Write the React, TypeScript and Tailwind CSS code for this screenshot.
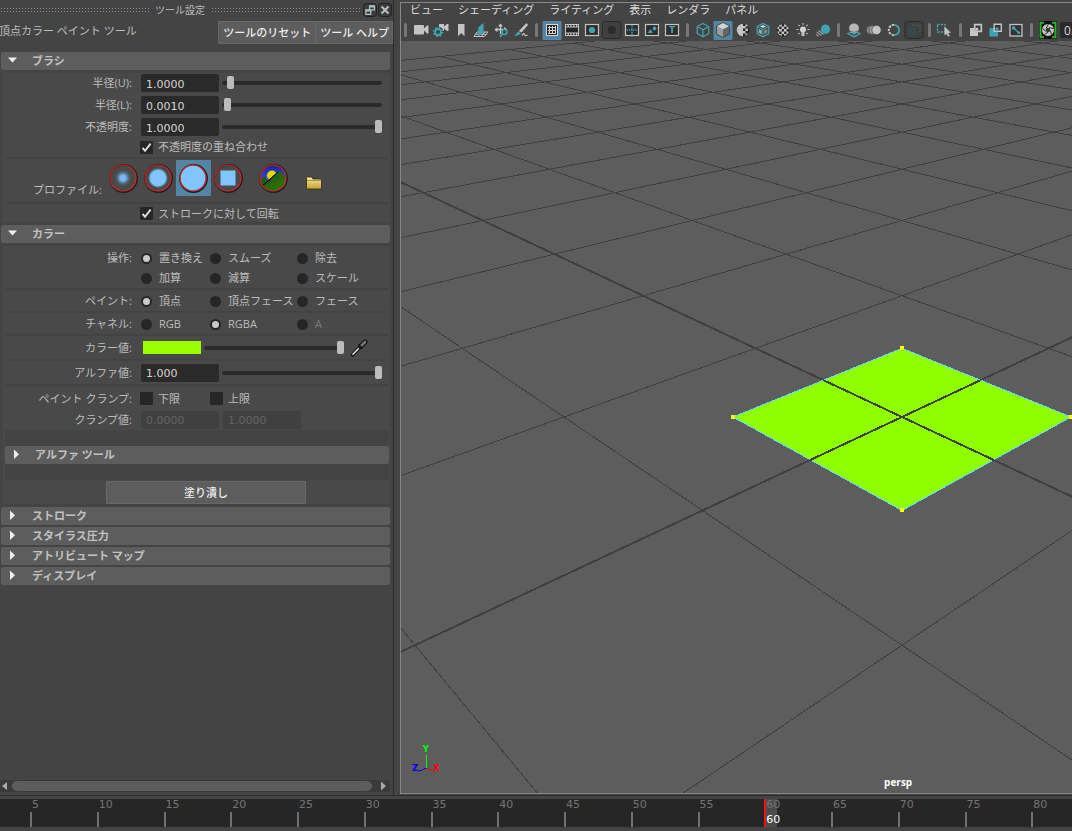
import React from "react";

const LIGHT = "#c4c4c4";
const TEAL = "#3fa3b3";
const DARK = "#262626";

/* ---------- small form pieces ---------- */

function Row({ label, htmlFor, className = "", children }: { label?: string; htmlFor?: string; className?: string; children: React.ReactNode }) {
  const text = "w-[129px] shrink-0 whitespace-nowrap text-right";
  return (
    <div className={`flex items-center gap-[9px] ${className}`}>
      {htmlFor ? (
        <label htmlFor={htmlFor} className={text}>{label}</label>
      ) : (
        <span className={text}>{label}</span>
      )}
      {children}
    </div>
  );
}

function NumberBox({ id, value, disabled, label }: { id: string; value: string; disabled?: boolean; label?: string }) {
  return (
    <input
      id={id}
      type="text"
      aria-label={label}
      defaultValue={value}
      disabled={disabled}
      className="h-[18px] w-[78px] shrink-0 rounded-xs bg-[#2a2a2a] px-[5px] pt-[2px] font-['DejaVu_Sans',sans-serif] text-[11px] text-[#d6d6d6] outline-none disabled:bg-[#404040] disabled:text-[#656565]"
    />
  );
}

function Slider({ label, value }: { label: string; value: number }) {
  return (
    <input
      type="range"
      aria-label={label}
      defaultValue={value}
      min={0}
      max={100}
      className="h-[13px] min-w-0 flex-1 appearance-none bg-transparent [&::-webkit-slider-runnable-track]:h-[4px] [&::-webkit-slider-runnable-track]:rounded-full [&::-webkit-slider-runnable-track]:bg-[#2a2a2a] [&::-webkit-slider-thumb]:-mt-[5px] [&::-webkit-slider-thumb]:h-[13px] [&::-webkit-slider-thumb]:w-[7px] [&::-webkit-slider-thumb]:appearance-none [&::-webkit-slider-thumb]:rounded-xs [&::-webkit-slider-thumb]:bg-[#bcbcbc]"
    />
  );
}

function Check({ label, checked }: { label: string; checked?: boolean }) {
  return (
    <label className="-ml-px flex items-center gap-[5px] whitespace-nowrap">
      <span className="grid">
        <input type="checkbox" defaultChecked={checked} className="peer col-start-1 row-start-1 size-[13px] appearance-none rounded-[1px] bg-[#262626]" />
        <svg viewBox="0 0 13 13" className="pointer-events-none invisible col-start-1 row-start-1 size-[13px] peer-checked:visible">
          <path d="M2.6 6.8 5 9.8 10.6 2.6" fill="none" stroke="#e2e2e2" strokeWidth="1.9" />
        </svg>
      </span>
      {label}
    </label>
  );
}

function Radio({ name, label, checked, disabled }: { name: string; label: string; checked?: boolean; disabled?: boolean }) {
  return (
    <label className={`flex items-center gap-[7px] whitespace-nowrap ${disabled ? "text-[#7b7b7b]" : ""}`}>
      <input
        type="radio"
        name={name}
        defaultChecked={checked}
        disabled={disabled}
        className="size-[11px] shrink-0 appearance-none rounded-full border-2 border-[#262626] bg-[#262626] checked:bg-[#cacaca]"
      />
      {label}
    </label>
  );
}

function RadioRow({ label, name, options, className = "" }: { label?: string; name: string; className?: string; options: { label: string; checked?: boolean; disabled?: boolean }[] }) {
  return (
    <Row label={label} className={className}>
      <div role="radiogroup" aria-label={label ?? name} className="grid flex-1 grid-cols-[69px_87px_1fr]">
        {options.map((o) => (
          <Radio key={o.label} name={name} {...o} />
        ))}
      </div>
    </Row>
  );
}

function SectionHeader({ title, open, nested }: { title: string; open?: boolean; nested?: boolean }) {
  return (
    <button
      type="button"
      aria-expanded={!!open}
      className="flex h-[18px] w-full shrink-0 items-center gap-[12px] rounded-xs bg-[#5d5d5d] pl-[5px] text-left font-bold text-[#c2c2c2]"
    >
      <svg viewBox="0 0 14 14" className={nested ? "-mr-px size-[14px]" : "size-[14px]"} fill="#eee">
        {open ? <path d="M2 3.500H11L6.500 8.500Z" /> : <path d="M4 1.500V11L9 6.200Z" />}
      </svg>
      {title}
    </button>
  );
}

const Divider = () => <div className="mx-[2px] h-[2px] shrink-0 bg-[#434343]" />;

/* ---------- brush profile pictures ---------- */

function Ring({ children }: { children: React.ReactNode }) {
  return (
    <svg viewBox="0 0 30 30" className="size-[30px]">
      <defs>
        <radialGradient id="soft"><stop offset="0" stopColor="#7cc2ff" /><stop offset=".35" stopColor="#70b2ec" /><stop offset="1" stopColor="#494949" stopOpacity="0" /></radialGradient>
        <radialGradient id="mid"><stop offset=".75" stopColor="#80c5ff" /><stop offset="1" stopColor="#80c5ff" stopOpacity="0" /></radialGradient>
        <linearGradient id="sky" x1="0" y1="0" x2="0" y2="1"><stop offset="0" stopColor="#141c8c" /><stop offset=".5" stopColor="#3848d0" /></linearGradient>
        <linearGradient id="hill" x1="0" y1="0" x2="1" y2="1"><stop offset="0" stopColor="#1c4b08" /><stop offset="1" stopColor="#348010" /></linearGradient>
        <clipPath id="disc"><circle cx="15" cy="15" r="12.800" /></clipPath>
      </defs>
      <circle cx="15.500" cy="15.500" r="13.600" fill="none" stroke="#1e1e1e" strokeWidth="1.600" />
      {children}
      <circle cx="15" cy="15" r="13" fill="none" stroke="#d42525" strokeWidth="1.200" />
    </svg>
  );
}

function Profile({ label, active, children }: { label: string; active?: boolean; children: React.ReactNode }) {
  return (
    <button type="button" aria-label={label} aria-pressed={!!active} className={`flex h-[36px] w-[35px] items-center justify-start rounded-[1px] pl-[2px] ${active ? "bg-[#5385a6]" : ""}`}>
      <Ring>{children}</Ring>
    </button>
  );
}

/* ---------- toolbar icons, each on a 20 x 20 board ---------- */

const frame = <rect x="3.500" y="4.500" width="13" height="11" fill="#2d2d2d" stroke={LIGHT} strokeWidth="1.200" />;
const balls = (
  <g fill={LIGHT}>
    {[[7, 4], [12, 4], [4.5, 6.5], [9.500, 6.500], [14.500, 6.500], [7, 9], [12, 9], [4.500, 11.500], [9.500, 11.500], [14.500, 11.500], [7, 14], [12, 14]].map(([x, y]) => (
      <rect key={`${x}-${y}`} x={x - 1} y={y} width="2.700" height="2.600" />
    ))}
  </g>
);

const icons: Record<string, React.ReactNode> = {
  camera: <path d="M3 6q0-1 1-1h8q1 0 1 1v2.500l3-3h1.500v8H16l-3-3V13.500q0 1-1 1H4q-1 0-1-1Z" fill={LIGHT} />,
  cameraSettings: (
    <>
      <path d="M8 4h5v2.500l3-2.500h1.500v7H16l-3-2.500V11H8Z" fill={LIGHT} />
      <circle cx="7" cy="12" r="5.500" fill="#444" />
      <circle cx="7" cy="12" r="3" fill="none" stroke={TEAL} strokeWidth="1.800" />
      <circle cx="7" cy="12" r="4.600" fill="none" stroke={TEAL} strokeWidth="1.300" strokeDasharray="1.800 1.812" />
    </>
  ),
  bookmark: <path d="M7 4h6.500v12.200L10.200 13 7 16.200Z" fill={LIGHT} />,
  imagePlane: (
    <>
      <path d="M6 12 3 16.500h10.500L17 12ZM4.500 14.300h11M7 16.500l3-4.500M10.500 16.500l3-4.500" fill="none" stroke={LIGHT} />
      <path d="M7.200 7.500 12.500 3v9.500l-5.300 4Z" fill={TEAL} />
    </>
  ),
  panZoom: (
    <>
      <path d="M9.500 4v10M4 9.500h10" stroke={LIGHT} strokeWidth="1.300" />
      <path d="M7 6.500 9.500 3.500 12 6.500ZM6.500 7.200 3.500 9.700l3 2.500ZM13 7l3.500 2.500L13 12Z" fill={LIGHT} />
      <circle cx="13.500" cy="12" r="2.500" fill="#444" stroke={TEAL} strokeWidth="1.500" />
      <path d="M11.500 14 9 16.800" stroke={TEAL} strokeWidth="1.800" />
    </>
  ),
  grease: (
    <>
      <path d="M15.500 3 17 5 10.500 12.500 7.800 11Z" fill={LIGHT} />
      <path d="M7 11.500 9.800 13.200Q7.500 16.500 3 15.600 5 14.500 7 11.500Z" fill={TEAL} />
      <path d="M11 15.500q1.500-3 2.500-1t3 .5" fill="none" stroke={LIGHT} strokeWidth="1.300" />
    </>
  ),
  grid: (
    <g shapeRendering="crispEdges">
      <rect x="4" y="4" width="12" height="12" fill={DARK} />
      <path d="M4.500 4.500h11v11h-11ZM7.500 6v8M10.500 6v8M13.500 6v8M6 7.500h8M6 10.500h8M6 13.500h8" fill="none" stroke="#d4d4d4" />
    </g>
  ),
  film: (
    <>
      <rect x="3" y="4" width="14" height="12" fill={LIGHT} />
      <path d="M4 5.800h12M4 14.200h12" stroke={DARK} strokeWidth="1.600" strokeDasharray="1.600 1.200" />
      <rect x="4" y="7.500" width="12" height="5" fill={DARK} />
    </>
  ),
  resolution: <>{frame}<circle cx="10" cy="10" r="3.100" fill={TEAL} /></>,
  gateMask: (
    <>
      <rect x=".5" y="1.500" width="18.500" height="17" rx="2.500" fill="#3f3f3f" stroke="#2a2a2a" />
      <circle cx="9.700" cy="10" r="4" fill="#2b2b2b" />
    </>
  ),
  fieldChart: <>{frame}<path d="M10 5.500v9.500M4.500 10h11" stroke={TEAL} strokeWidth="1.500" strokeDasharray="1.300 .9" /></>,
  safeAction: <>{frame}<path d="M5.500 13 8.500 9 11 13Z" fill={TEAL} /><circle cx="12.500" cy="8.500" r="1.900" fill={TEAL} /></>,
  safeTitle: <>{frame}<text x="10" y="13.200" textAnchor="middle" fill={TEAL} fontFamily="DejaVu Sans" fontWeight="700" fontSize="9">T</text></>,
  wireCube: <path d="M10 3.500 15.800 6.500v7L10 16.700 4.200 13.500v-7ZM4.200 6.500 10 9.700l5.800-3.200M10 9.700v7" fill="none" stroke={TEAL} strokeWidth="1.200" />,
  shadedCube: (
    <>
      <path d="M10 2.500 16.500 6 10 9.500 3.500 6Z" fill="#d2d2d2" />
      <path d="M3.500 6 10 9.500V17.500L3.500 14Z" fill="#9c9c9c" />
      <path d="M16.500 6 10 9.500V17.500L16.500 14Z" fill="#666" />
      <path d="M10 2.500 16.500 6v8L10 17.500 3.500 14V6Z" fill="none" stroke="#393939" strokeWidth=".8" />
    </>
  ),
  halfChecker: (
    <>
      <circle cx="10" cy="10" r="6.300" fill={DARK} />
      <path d="M10 3.700a6.300 6.300 0 0 0 0 12.600Z" fill={LIGHT} />
      <path d="M10 6h2.500v2.500H10ZM12.500 8.500H15V11h-2.500ZM10 11h2.500v2.500H10ZM12.500 4l2 1v1.500h-2ZM12.500 13.500h2.500L12.500 16Z" fill={LIGHT} />
    </>
  ),
  wireShaded: (
    <>
      <path d="M10 3.500 15.800 6.500v7L10 16.700 4.200 13.500v-7Z" fill="#3a3a3a" stroke={TEAL} strokeWidth="1.300" />
      <path d="M7 6.500 10 5l3 1.500L10 8.100Z" fill="#d4d4d4" />
      <path d="M5.600 8.800 8.900 10.600v4L5.600 12.800Z" fill="#a8a8a8" />
      <path d="M14.400 8.800 11.100 10.600v4l3.300-1.800Z" fill="#858585" />
      <path d="M4.200 6.500 10 9.700l5.800-3.200M10 9.700v7" fill="none" stroke={TEAL} strokeWidth="1.100" />
    </>
  ),
  checker: <><circle cx="10" cy="10" r="6.500" fill={DARK} /><g clipPath="url(#checkerClip)">{balls}</g></>,
  bulb: (
    <>
      <circle cx="10" cy="9.500" r="3" fill="#d2d2d2" />
      <path d="M8.500 11.500h3V16h-3Z" fill={LIGHT} />
      <path d="M10 3v2M3.500 9.500h2M14.500 9.500h2M5.300 4.800l1.400 1.400M14.700 4.800l-1.400 1.400M5.300 14.200l1.400-1.400M14.700 14.200l-1.400-1.400" stroke={LIGHT} strokeWidth="1.100" />
    </>
  ),
  shadows: (
    <>
      <path d="M3.500 12l5 3.500M5.500 10.500l5 4M3 14.500l3 1.800" stroke="#999" strokeWidth="1.200" />
      <circle cx="12.500" cy="9.300" r="4.700" fill={TEAL} />
    </>
  ),
  occlusion: (
    <>
      <path d="M4 13.500 10 11l6 2.500-6 3.500ZM7 12l6 4M13 12l-6 4" fill="none" stroke={TEAL} strokeWidth="1.300" />
      <circle cx="10" cy="8.300" r="4.900" fill="#b6b6b6" />
      <path d="M6 11q4 2.500 8 0" fill="none" stroke="#777" />
    </>
  ),
  motion: (
    <>
      <circle cx="7" cy="10" r="4.300" fill="#8a8a8a" />
      <circle cx="9.500" cy="10" r="4.500" fill="#a2a2a2" stroke="#444" strokeWidth=".8" />
      <circle cx="12.500" cy="10" r="4.700" fill={LIGHT} stroke="#444" strokeWidth=".8" />
    </>
  ),
  antialias: (
    <>
      <path d="M10 4.800a5.200 5.200 0 0 0 0 10.400" fill="none" stroke={LIGHT} strokeWidth="2" strokeDasharray="2.200 1.200" />
      <path d="M10 4.800a5.200 5.200 0 0 1 0 10.400" fill="none" stroke={TEAL} strokeWidth="1.800" />
    </>
  ),
  depth: (
    <>
      <rect x="1" y="1.500" width="18" height="17" rx="2.500" fill="#3f3f3f" stroke="#2a2a2a" />
      <rect x="4" y="8" width="8" height="8" fill="#34494e" />
      <path d="M8 5h8v7" fill="none" stroke="#4f4f4f" strokeWidth="2.500" strokeDasharray="1.500 1.300" />
    </>
  ),
  isolate: (
    <>
      <rect x="2.500" y="4.500" width="7.500" height="7.500" fill="none" stroke={TEAL} strokeWidth="1.400" strokeDasharray="2.200 1.200" />
      <path d="M9.500 6.500v9l2-1.800 1.600 3 1.600-.9-1.500-2.800 2.700-.3Z" fill={LIGHT} />
    </>
  ),
  xray: (
    <>
      <rect x="4" y="8" width="8" height="8" fill={LIGHT} />
      <path d="M8.700 4.700h6.600v6.600H8.700Z" fill="#3a3a3a" stroke={LIGHT} strokeWidth="1.700" />
      <rect x="9.500" y="7.800" width="2.800" height="2.800" fill={LIGHT} />
    </>
  ),
  xrayActive: (
    <>
      <rect x="3.500" y="8" width="8.500" height="8.500" fill={TEAL} />
      <path d="M8.200 4.200h7.100v7.100H8.200Z" fill="#333" stroke={LIGHT} strokeWidth="1.400" />
      <rect x="9.500" y="7.500" width="3" height="3" fill={TEAL} />
    </>
  ),
  xrayJoints: (
    <>
      <rect x="4" y="4.500" width="12" height="11.500" fill="#333" stroke={LIGHT} strokeWidth="1.300" />
      <path d="M7.500 8l5.500 5" stroke={TEAL} strokeWidth="1.500" />
      <path d="M6 6.500h3.200v3H6ZM11.500 11.500h2.500V14h-2.500Z" fill={TEAL} />
    </>
  ),
  exposure: (
    <>
      <path d="M1 1h18v18H1Z" fill="#111" />
      <path d="M6 2.800H2.500v14.500H6M14 2.800h3.500v14.500H14" fill="none" stroke="#24b424" strokeWidth="2" />
      <circle cx="10" cy="10" r="6" fill={LIGHT} />
      <circle cx="10" cy="10" r="2.200" fill="#333" />
      <path d="M8 8.500 10.500 4M11 7.700l5 .8M12.200 10.500l1.500 4.300M10 12.300 6.200 14.600M7.800 11.200 4.200 8.500" stroke="#333" strokeWidth="1" />
    </>
  ),
};

type Tool = [icon: string, label: string, active?: boolean];
const toolGroups: Tool[][] = [
  [["camera", "カメラの選択"], ["cameraSettings", "カメラ アトリビュート"], ["bookmark", "ブックマーク"], ["imagePlane", "イメージ プレーン"], ["panZoom", "2D パン/ズーム"], ["grease", "グリース ペンシル"]],
  [["grid", "グリッド", true], ["film", "フィルム ゲート"], ["resolution", "解像度ゲート"], ["gateMask", "ゲート マスク"], ["fieldChart", "フィールド チャート"], ["safeAction", "セーフ アクション"], ["safeTitle", "セーフ タイトル"]],
  [["wireCube", "ワイヤフレーム"], ["shadedCube", "スムーズ シェード", true], ["halfChecker", "既定のマテリアル"], ["wireShaded", "シェード上のワイヤ"], ["checker", "テクスチャ"], ["bulb", "ライト"], ["shadows", "シャドウ"]],
  [["occlusion", "アンビエント オクルージョン"], ["motion", "モーション ブラー"], ["antialias", "アンチエイリアス"], ["depth", "被写界深度"]],
  [["isolate", "選択項目の分離"]],
  [["xray", "X 線表示"], ["xrayActive", "アクティブ X 線"], ["xrayJoints", "ジョイント X 線"]],
];

function Separator() {
  return (
    <span className="flex w-[11px] shrink-0 justify-center">
      <span className="h-[14px] w-[3px] rounded-full bg-[#777]" />
    </span>
  );
}

function ToolButton({ tool: [icon, label, active] }: { tool: Tool }) {
  return (
    <button type="button" aria-label={label} aria-pressed={!!active} className="size-[20px] shrink-0">
      <svg viewBox="0 0 20 20" className="size-[20px]">
        {active && <rect x=".5" y="1" width="19" height="19" rx="1" fill="#5385a6" />}
        {icons[icon]}
      </svg>
    </button>
  );
}

/* ---------- 3D view ---------- */

const GRID = 12;
const DEPTH = 0.153;

/** Projects a point of the ground plane through the persp camera. */
function project(i: number, j: number): [number, number] {
  const w = 1 + DEPTH * (i + j);
  return [902 + (169 * (i - j)) / w, -100.6 + 517.6 / w];
}

/** Nearest value along a grid line that is still in front of the camera. */
const nearest = (fixed: number) => Math.max(-GRID, (0.15 - 1) / DEPTH - fixed);

const gridLines = Array.from({ length: 2 * GRID + 1 }, (_, n) => n - GRID).flatMap((n) =>
  nearest(n) >= GRID
    ? []
    : [
        { key: `i${n}`, axis: n === 0, from: project(n, nearest(n)), to: project(n, GRID) },
        { key: `j${n}`, axis: n === 0, from: project(nearest(n), n), to: project(GRID, n) },
      ],
);

function Line({ from, to, width, color }: { from: [number, number]; to: [number, number]; width: number; color: string }) {
  return <line x1={from[0]} y1={from[1]} x2={to[0]} y2={to[1]} stroke={color} strokeWidth={width} />;
}

function Viewport() {
  const corners = [project(0.5, 0.5), project(0.5, -0.5), project(-0.5, -0.5), project(-0.5, 0.5)];
  return (
    <svg viewBox="401 41 671 752" preserveAspectRatio="xMidYMid slice" className="absolute inset-0 size-full" role="img" aria-label="persp">
      <g shapeRendering="crispEdges">
        {gridLines.map((l) => (
          <Line key={l.key} from={l.from} to={l.to} width={l.axis ? 2 : 1} color="#404040" />
        ))}
        <polygon points={corners.map((c) => c.join(",")).join(" ")} fill="#8fff00" stroke="#64dcff" strokeWidth="1" />
        <Line from={project(0, -0.5)} to={project(0, 0.5)} width={2} color="#404040" />
        <Line from={project(-0.5, 0)} to={project(0.5, 0)} width={2} color="#404040" />
        {corners.map(([x, y]) => (
          <rect key={`${x},${y}`} x={Math.round(x) - 2} y={Math.round(y) - 2} width="4" height="4" fill="#ffff00" />
        ))}
      </g>
    </svg>
  );
}

function AxisGizmo() {
  return (
    <svg viewBox="0 0 32 32" className="absolute bottom-[17px] left-[10px] size-[32px]" fontFamily="DejaVu Sans" fontWeight="700" fontSize="8.500">
      <g shapeRendering="crispEdges" fill="none">
        <path d="M15.500 11v13" stroke="#00ff00" />
        <path d="M15.500 24 7 27.500" stroke="#0000ff" />
        <path d="M15.500 24 24 27.500" stroke="#ff0000" />
      </g>
      <text x="11.800" y="8" fill="#00ff00">Y</text>
      <text x="1" y="27" fill="#0000ff">Z</text>
      <text x="22" y="27" fill="#ff0000">X</text>
    </svg>
  );
}

/* ---------- time line ---------- */

const frames = Array.from({ length: 16 }, (_, n) => (n + 1) * 5);
const CURRENT = 60;

function TimeSlider() {
  return (
    <footer className="h-[32px] shrink-0 overflow-hidden border-b-4 border-[#444] bg-[#262626] font-['DejaVu_Sans',sans-serif] text-[11px]">
      <div className="-mr-[26px] ml-[30px] grid h-full grid-cols-16">
        {frames.map((f) => (
          <div key={f} className="relative flex flex-col justify-between leading-[11px] text-[#747474]">
            {f === CURRENT && <span className="absolute inset-y-0 left-0 w-[13px] border-l-2 border-[#ff1010] bg-[#4c4c4c]" />}
            <span className="relative pl-[2px]">{f}</span>
            {f === CURRENT ? (
              <span className="relative pb-[2px] pl-[2px] text-white">{f}</span>
            ) : (
              <span className="h-[15px] w-[2px] bg-[#707070]" />
            )}
          </div>
        ))}
      </div>
    </footer>
  );
}

/* ---------- tool settings panel ---------- */

const dots = "h-[6px] flex-1 bg-[radial-gradient(circle,#8c8c8c_0.7px,transparent_1px)] bg-[size:3px_3px]";
const headerButton = "h-[23px] border border-[#676767] bg-[#5d5d5d] font-medium";

function ToolSettings() {
  return (
    <aside className="flex w-[394px] shrink-0 flex-col overflow-hidden border-r border-[#2c2c2c] text-[#bdbdbd]">
      <div className="flex h-[20px] shrink-0 items-center">
        <span className={dots} />
        <h1 className="px-[6px] text-[10px]">ツール設定</h1>
        <span className={dots} />
        <div className="mr-px ml-[3px] flex gap-[1px]">
          <button type="button" aria-label="ドッキング解除">
            <svg viewBox="0 0 14 14" className="size-[14px]">
              <rect x=".5" y=".5" width="13" height="13" rx="3" fill="#3c3c3c" stroke="#232323" />
              <path d="M6.500 2.800h5v4h-5ZM6.500 4h5M2.800 6.800h5v4.500h-5ZM2.800 8h5" fill="#3c3c3c" stroke="#b4c2c6" strokeWidth="1.200" />
            </svg>
          </button>
          <button type="button" aria-label="閉じる">
            <svg viewBox="0 0 14 14" className="size-[14px]">
              <rect x=".5" y=".5" width="13" height="13" rx="3" fill="#3c3c3c" stroke="#232323" />
              <path d="M3.500 3.500l7 7M10.500 3.500l-7 7" stroke="#b4c2c6" strokeWidth="2" />
            </svg>
          </button>
        </div>
      </div>

      <div className="flex shrink-0 items-start justify-between pt-px pb-[8px]">
        <h2 className="-ml-px pt-[3px] whitespace-nowrap">頂点カラー ペイント ツール</h2>
        <div className="flex text-[#eee]">
          <button type="button" className={`${headerButton} px-[4px]`}>ツールのリセット</button>
          <button type="button" className={`${headerButton} border-l-0 pr-[3px] pl-[4px]`}>ツール ヘルプ</button>
        </div>
      </div>

      <div className="flex min-h-0 flex-1 flex-col overflow-hidden pl-px pr-[3px]">
        <SectionHeader title="ブラシ" open />
        <section className="my-[3px] ml-[2px] flex shrink-0 flex-col bg-[#494949]">
          <div className="flex flex-col gap-[4px] pt-px pr-[8px]">
            {([["radiusU", "半径(U):", "1.0000", 3], ["radiusL", "半径(L):", "0.0010", 1], ["opacity", "不透明度:", "1.0000", 100]] as const).map(([id, label, value, pos]) => (
              <Row key={id} label={label} htmlFor={id}>
                <div className="flex flex-1 items-center gap-[3px]">
                  <NumberBox id={id} value={value} />
                  <Slider label={label} value={pos} />
                </div>
              </Row>
            ))}
          </div>
          <Row className="h-[21px] pt-px"><Check label="不透明度の重ね合わせ" checked /></Row>
          <Divider />
          <div className="flex h-[43px] pt-px">
            <span className="w-[99px] pt-[23px] text-right">プロファイル:</span>
            <div className="flex pl-[4px]">
              <Profile label="ガウス"><circle cx="15" cy="15" r="9" fill="url(#soft)" /></Profile>
              <Profile label="ソフト"><circle cx="15" cy="15" r="10" fill="url(#mid)" /></Profile>
              <Profile label="ソリッド" active><circle cx="15" cy="15" r="12.500" fill="#80c5ff" /></Profile>
              <Profile label="正方形"><rect x="7.500" y="7.500" width="15" height="15" fill="#80c5ff" /></Profile>
            </div>
            <div className="flex pl-[10px]">
              <Profile label="ファイル ブラシ">
                <g clipPath="url(#disc)">
                  <path d="M0 0h30v30H0Z" fill="url(#sky)" />
                  <circle cx="14" cy="12.500" r="5" fill="#e2d70a" />
                  <path d="M0 20 6 13l4 5 12-10 8 9v13H0Z" fill="url(#hill)" />
                  <path d="M3 24 20 9 11 17.500Z" fill="#111" stroke="#111" />
                </g>
              </Profile>
              <button type="button" aria-label="参照" className="h-[36px] pl-[14px]">
                <svg viewBox="0 0 18 16" className="mt-[10px] h-[16px] w-[18px]">
                  <defs><linearGradient id="folder" x1="0" y1="0" x2="0" y2="1"><stop offset="0" stopColor="#f7eaa0" /><stop offset="1" stopColor="#c7a032" /></linearGradient></defs>
                  <path d="M1.500 13.500V3q0-1 1-1h4l1.500 2h7.500q1 0 1 1v8.500q0 .5-.5.500h-14Q1.500 14 1.500 13.500Z" fill="url(#folder)" stroke="#332a10" strokeWidth=".8" />
                  <path d="M2 5.500h14" stroke="#8c7630" strokeWidth=".7" />
                </svg>
              </button>
            </div>
          </div>
          <Divider />
          <Row className="h-[18px] pt-px"><Check label="ストロークに対して回転" checked /></Row>
        </section>

        <SectionHeader title="カラー" open />
        <section className="my-[3px] ml-[2px] flex shrink-0 flex-col bg-[#494949]">
          <div className="h-[2px]" />
          <RadioRow className="h-[20px]" name="操作" label="操作:" options={[{ label: "置き換え", checked: true }, { label: "スムーズ" }, { label: "除去" }]} />
          <RadioRow className="h-[20px]" name="操作" options={[{ label: "加算" }, { label: "減算" }, { label: "スケール" }]} />
          <Divider />
          <RadioRow className="h-[21px] pt-px" name="ペイント" label="ペイント:" options={[{ label: "頂点", checked: true }, { label: "頂点フェース" }, { label: "フェース" }]} />
          <Divider />
          <RadioRow className="h-[21px] pt-px" name="チャネル" label="チャネル:" options={[{ label: "RGB" }, { label: "RGBA", checked: true }, { label: "A", disabled: true }]} />
          <Divider />
          <Row className="h-[23px] pr-[22px]" label="カラー値:">
            <div className="flex flex-1 items-center pl-[2px]">
              <button type="button" aria-label="カラー値" className="mr-[3px] h-[13px] w-[58px] bg-[#99ff00]" />
              <Slider label="カラー値" value={100} />
              <button type="button" aria-label="スポイト" className="ml-[6px]">
                <svg viewBox="0 0 18 18" className="size-[18px]">
                  <path d="M10.500 7.500 2.500 16" stroke="#111" strokeWidth="3.400" strokeLinecap="round" />
                  <path d="M10 8 2.500 15.800" stroke="#e8e8e8" strokeWidth="1.500" />
                  <path d="M10.500 7.500 15 3" stroke="#111" strokeWidth="5" strokeLinecap="round" />
                  <path d="M11 7 15 3" stroke="#777" strokeWidth="2.600" strokeLinecap="round" />
                  <path d="M8.500 5.500l4 4" stroke="#111" strokeWidth="1.500" />
                </svg>
              </button>
            </div>
          </Row>
          <Divider />
          <Row className="h-[23px] pr-[8px]" label="アルファ値:" htmlFor="alpha">
            <div className="flex flex-1 items-center gap-[3px]">
              <NumberBox id="alpha" value="1.000" />
              <Slider label="アルファ値" value={100} />
            </div>
          </Row>
          <Divider />
          <Row className="h-[24px] pt-px" label="ペイント クランプ:">
            <div className="grid flex-1 grid-cols-[70px_1fr]">
              <Check label="下限" />
              <Check label="上限" />
            </div>
          </Row>
          <Row className="h-[20px] pb-px" label="クランプ値:" htmlFor="clampMin">
            <div className="flex gap-[4px]">
              <NumberBox id="clampMin" value="0.0000" disabled />
              <NumberBox id="clampMax" label="クランプ値 上限" value="1.0000" disabled />
            </div>
          </Row>
          <div className="ml-[2px] mr-px bg-[#444] py-[16px]">
            <SectionHeader title="アルファ ツール" nested />
          </div>
          <button type="button" className="mt-px ml-[103px] h-[23px] w-[200px] border border-[#676767] bg-[#5d5d5d] font-medium text-[#eee]">塗り潰し</button>
        </section>

        <div className="flex flex-col gap-[2px]">
          {["ストローク", "スタイラス圧力", "アトリビュート マップ", "ディスプレイ"].map((t) => (
            <SectionHeader key={t} title={t} />
          ))}
        </div>
      </div>

      <div className="mr-[3px] mb-[3px] flex h-[12px] shrink-0 items-center bg-[#3a3a3a]">
        <button type="button" aria-label="左へスクロール"><svg viewBox="0 0 12 10" className="h-[10px] w-[12px]" fill="#aaa"><path d="M7 1v8L2 5Z" /></svg></button>
        <div className="h-[10px] flex-1 rounded-full bg-[#5d5d5d]" />
        <button type="button" aria-label="右へスクロール"><svg viewBox="0 0 18 10" className="h-[10px] w-[18px]" fill="#aaa"><path d="M9 0.500v9L14 5Z" /></svg></button>
      </div>
    </aside>
  );
}

export default function App() {
  return (
    <div className="flex h-screen min-h-[640px] flex-col overflow-hidden bg-[#444] font-['Open_Sans','Noto_Sans_CJK_JP',sans-serif] text-[11px] leading-[14px]">
      <div className="flex min-h-0 flex-1 border-b border-[#2c2c2c]">
        <ToolSettings />
        <main className="mt-[2px] mb-px ml-[6px] flex min-w-0 flex-1 flex-col border-y border-l border-[#888]">
          <nav className="flex h-[17px] shrink-0 items-start gap-[15px] pl-[9px] text-[#ddd]">
            {["ビュー", "シェーディング", "ライティング", "表示", "レンダラ", "パネル"].map((m) => (
              <button key={m} type="button" className="shrink-0">{m}</button>
            ))}
          </nav>
          <div className="flex h-[21px] shrink-0 items-center overflow-hidden pb-px">
            <svg className="size-0"><clipPath id="checkerClip"><circle cx="10" cy="10" r="6" /></clipPath></svg>
            {toolGroups.map((group, n) => (
              <div key={n} className={`flex shrink-0 items-center ${n === 0 ? "-ml-px" : ""}`}>
                <Separator />
                {group.map((t) => (
                  <ToolButton key={t[0]} tool={t} />
                ))}
              </div>
            ))}
            <Separator />
            <div className="flex shrink-0 items-center gap-[2px] pl-px">
              <ToolButton tool={["exposure", "露出"]} />
              <input aria-label="露出" defaultValue="0.00" className="h-[16px] w-[44px] rounded-xs bg-[#2a2a2a] px-[4px] text-[12px] text-[#d6d6d6]" />
            </div>
          </div>
          <div className="relative min-h-0 flex-1 overflow-hidden bg-[#5d5d5d]">
            <Viewport />
            <AxisGizmo />
            <span className="absolute bottom-[4px] left-[72%] text-[10px] font-bold text-white">persp</span>
          </div>
        </main>
      </div>
      <div className="h-[3px] shrink-0" />
      <TimeSlider />
    </div>
  );
}
